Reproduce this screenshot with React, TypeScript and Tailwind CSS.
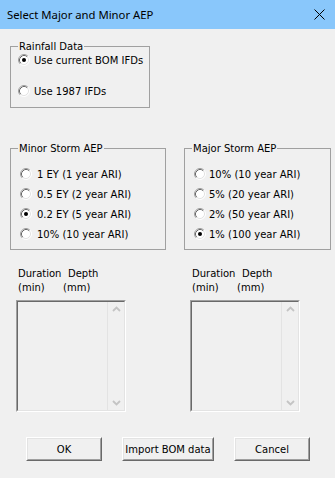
import React from "react";

const F = { fontFamily: "'DejaVu Sans', 'Liberation Sans', sans-serif" };

function Radio({ checked }: { checked?: boolean }) {
  return (
    <svg width="12" height="12" viewBox="0 0 12 12" className="shrink-0">
      <circle cx="6" cy="6" r="5" fill="#ffffff" />
      <path d="M2.11 9.89 A5.5 5.5 0 0 1 9.89 2.11" fill="none" stroke="#a0a0a0" strokeWidth="1" />
      <path d="M9.89 2.11 A5.5 5.5 0 0 1 2.11 9.89" fill="none" stroke="#ffffff" strokeWidth="1" />
      <path d="M2.82 9.18 A4.5 4.5 0 0 1 9.18 2.82" fill="none" stroke="#696969" strokeWidth="1" />
      <path d="M9.18 2.82 A4.5 4.5 0 0 1 2.82 9.18" fill="none" stroke="#e3e3e3" strokeWidth="1" />
      {checked && <circle cx="6" cy="6" r="2" fill="#000000" />}
    </svg>
  );
}

function RadioRow({ label, checked, gap }: { label: string; checked?: boolean; gap: string }) {
  return (
    <div className={`flex items-center h-[20px] ${gap}`}>
      <Radio checked={checked} />
      <span className="text-[10px] leading-[13px] text-black whitespace-nowrap">{label}</span>
    </div>
  );
}

function Legend({ children, left }: { children: React.ReactNode; left: string }) {
  return (
    <span
      className={`absolute top-[-7px] ${left} bg-[#f0f0f0] px-[1px] text-[10px] leading-[13px] text-black whitespace-nowrap`}
    >
      {children}
    </span>
  );
}

function Chevron({ up }: { up?: boolean }) {
  return (
    <svg width="9" height="6" viewBox="0 0 9 6">
      <polyline
        points={up ? "1,5 4.5,1.5 8,5" : "1,1 4.5,4.5 8,1"}
        fill="none"
        stroke="#c4c4c4"
        strokeWidth="1.8"
      />
    </svg>
  );
}

function ListPanel({ depthGap }: { depthGap: string }) {
  return (
    <div className="flex flex-col">
      <div className="text-[10px] leading-[14px] text-black ml-[2px]">
        <div className="flex">
          <span className="w-[50px]">Duration</span>
          <span>Depth</span>
        </div>
        <div className="flex">
          <span className={depthGap}>(min)</span>
          <span>(mm)</span>
        </div>
      </div>
      <div className="mt-[5px] w-[110px] h-[112px] border-t border-l border-t-[#a0a0a0] border-l-[#a0a0a0] border-b border-r border-b-white border-r-white">
        <div className="w-full h-full flex border-t border-l border-t-[#696969] border-l-[#696969] border-b border-r border-b-[#e3e3e3] border-r-[#e3e3e3]">
          <div className="flex-1 bg-[#f0f0f0]" />
          <div className="w-[17px] border-l border-l-[#e3e3e3] flex flex-col items-center justify-between py-[4px]">
            <Chevron up />
            <Chevron />
          </div>
        </div>
      </div>
    </div>
  );
}

function Button({ children, w }: { children: React.ReactNode; w: string }) {
  return (
    <div className={`${w} h-[24px] border-t border-l border-t-white border-l-white border-b border-r border-b-[#696969] border-r-[#696969]`}>
      <div className="w-full h-full flex items-center justify-center bg-[#f0f0f0] border-t border-l border-t-[#e3e3e3] border-l-[#e3e3e3] border-b border-r border-b-[#a0a0a0] border-r-[#a0a0a0] text-[10px] text-black whitespace-nowrap">
        {children}
      </div>
    </div>
  );
}

export default function App() {
  return (
    <div className="w-[335px] h-[478px] bg-[#f0f0f0] flex flex-col overflow-hidden" style={F}>
      <div
        className="h-[29px] shrink-0 bg-[#89c7fb] flex items-center justify-between pl-[7px] pr-[10px]"
        style={{ fontFamily: "'Noto Sans', 'Open Sans', sans-serif" }}
      >
        <span className="text-[11.3px] text-[#000] leading-none">Select Major and Minor AEP</span>
        <svg width="11" height="11" viewBox="0 0 11 11">
          <path d="M0.5 0.5 L10.5 10.5 M10.5 0.5 L0.5 10.5" stroke="#000" strokeWidth="1" />
        </svg>
      </div>

      <div className="relative mt-[17px] ml-[10px] w-[140px] h-[62px] border border-[#a0a0a0]">
        <Legend left="left-[7px]">Rainfall Data</Legend>
        <div className="flex flex-col pl-[7px] pt-[3px] gap-[11px]">
          <RadioRow label="Use current BOM IFDs" checked gap="gap-[4px]" />
          <RadioRow label="Use 1987 IFDs" gap="gap-[4px]" />
        </div>
      </div>

      <div className="flex mt-[40px] ml-[10px] gap-[18px]">
        <div className="relative w-[156px] h-[102px] border border-[#a0a0a0]">
          <Legend left="left-[7px]">Minor Storm AEP</Legend>
          <div className="flex flex-col pl-[9px] pt-[15px]">
            <RadioRow label="1 EY (1 year ARI)" gap="gap-[5px]" />
            <RadioRow label="0.5 EY (2 year ARI)" gap="gap-[5px]" />
            <RadioRow label="0.2 EY (5 year ARI)" checked gap="gap-[5px]" />
            <RadioRow label="10% (10 year ARI)" gap="gap-[5px]" />
          </div>
        </div>
        <div className="relative w-[147px] h-[102px] border border-[#a0a0a0]">
          <Legend left="left-[7px]">Major Storm AEP</Legend>
          <div className="flex flex-col pl-[9px] pt-[15px]">
            <RadioRow label="10% (10 year ARI)" gap="gap-[3px]" />
            <RadioRow label="5% (20 year ARI)" gap="gap-[3px]" />
            <RadioRow label="2% (50 year ARI)" gap="gap-[3px]" />
            <RadioRow label="1% (100 year ARI)" checked gap="gap-[3px]" />
          </div>
        </div>
      </div>

      <div className="flex mt-[17px] ml-[16px] gap-[64px]">
        <ListPanel depthGap="w-[45px]" />
        <ListPanel depthGap="w-[45px]" />
      </div>

      <div className="flex mt-[25px] ml-[26px] gap-[20px]">
        <Button w="w-[76px]">OK</Button>
        <Button w="w-[92px]">Import BOM data</Button>
        <Button w="w-[76px]">Cancel</Button>
      </div>
    </div>
  );
}
